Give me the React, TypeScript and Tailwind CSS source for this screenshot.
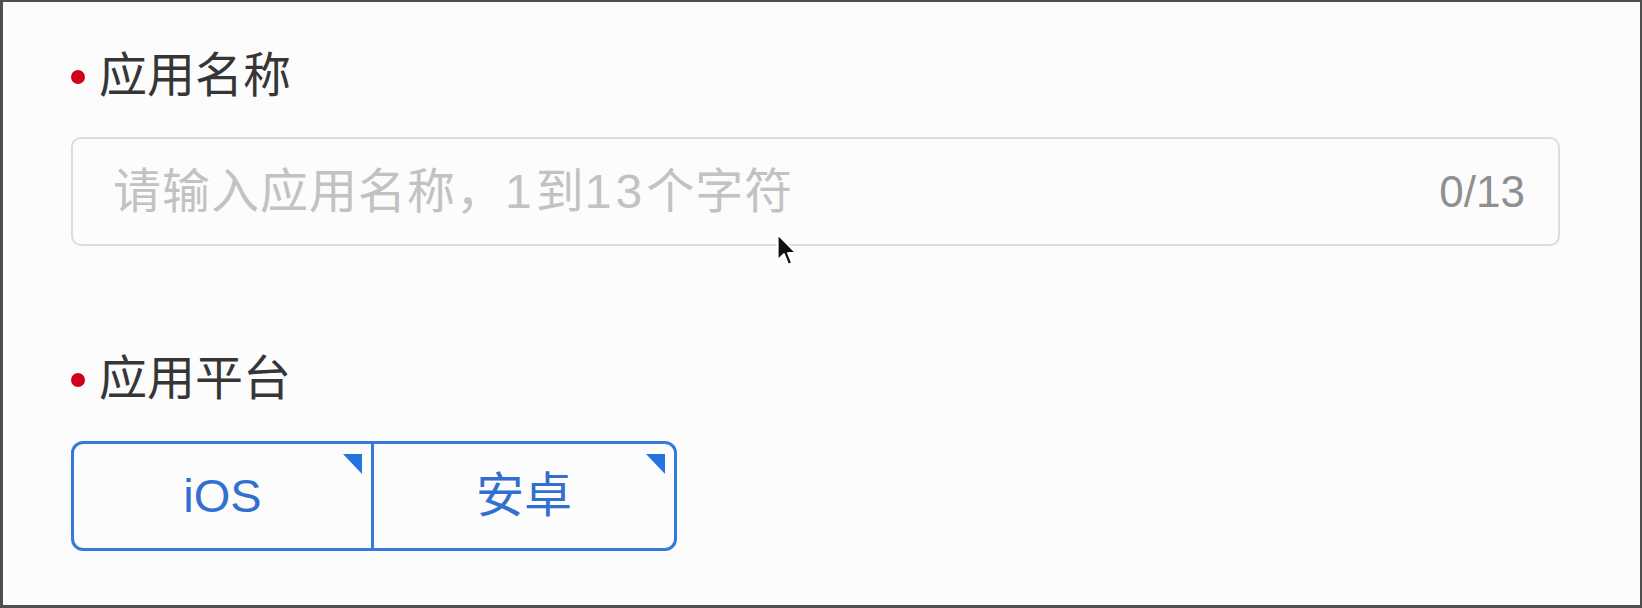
import React from "react";

const FONT = '"Liberation Sans", "Noto Sans CJK SC", sans-serif';

function Corner() {
  return (
    <svg
      className="absolute top-[10px] right-[9px]"
      width="19"
      height="20"
      viewBox="0 0 19 20"
    >
      <polygon points="0,0 19,0 19,20" fill="#2473e0" />
    </svg>
  );
}

function Label({ text }: { text: string }) {
  return (
    <div className="flex items-center h-[48px]">
      <span className="w-[14px] h-[14px] rounded-full bg-[#d0021b] mr-[14px] mt-[2px]" />
      <span className="text-[48px] leading-[48px] text-[#363636]">{text}</span>
    </div>
  );
}

export default function App() {
  return (
    <div
      className="relative w-[1642px] h-[608px] bg-[#fcfcfc] border-t-2 border-l-[3px] border-r-2 border-b-[3px] border-[#4f4f4f] pl-[68px] pt-[50px] overflow-hidden"
      style={{ fontFamily: FONT }}
    >
      <Label text="应用名称" />
      <div className="mt-[37px] w-[1489px] h-[109px] border-2 border-[#dcdcdc] rounded-[10px] flex items-center justify-between pl-[40px] pr-[33px]">
        <span className="text-[48px] text-[#c2c2c2] tracking-[1px]">
          请输入应用名称，<span className="tracking-[4px]">1</span>到
          <span className="tracking-[4px]">13</span>个字符
        </span>
        <span className="text-[44px] text-[#8f8f8f]">0/13</span>
      </div>

      <div className="mt-[109px]">
        <Label text="应用平台" />
      </div>

      <div className="mt-[38px] flex w-[606px] h-[110px] border-[3px] border-[#3579dd] rounded-[12px] overflow-hidden">
        <div className="relative w-[297px] flex items-center justify-center">
          <span className="text-[47px] text-[#3270cf]">iOS</span>
          <Corner />
        </div>
        <div className="relative flex-1 border-l-[3px] border-[#3579dd] flex items-center justify-center">
          <span className="text-[48px] text-[#3270cf]">安卓</span>
          <Corner />
        </div>
      </div>

      <svg
        className="absolute left-[771px] top-[230px]"
        width="24"
        height="36"
        viewBox="0 0 22 34"
      >
        <path
          d="M3 2 L3 27 L9 21 L13 31 L17 29.5 L13 20 L21 20 Z"
          fill="#111"
          stroke="#fff"
          strokeWidth="2"
          strokeLinejoin="round"
        />
      </svg>
    </div>
  );
}
